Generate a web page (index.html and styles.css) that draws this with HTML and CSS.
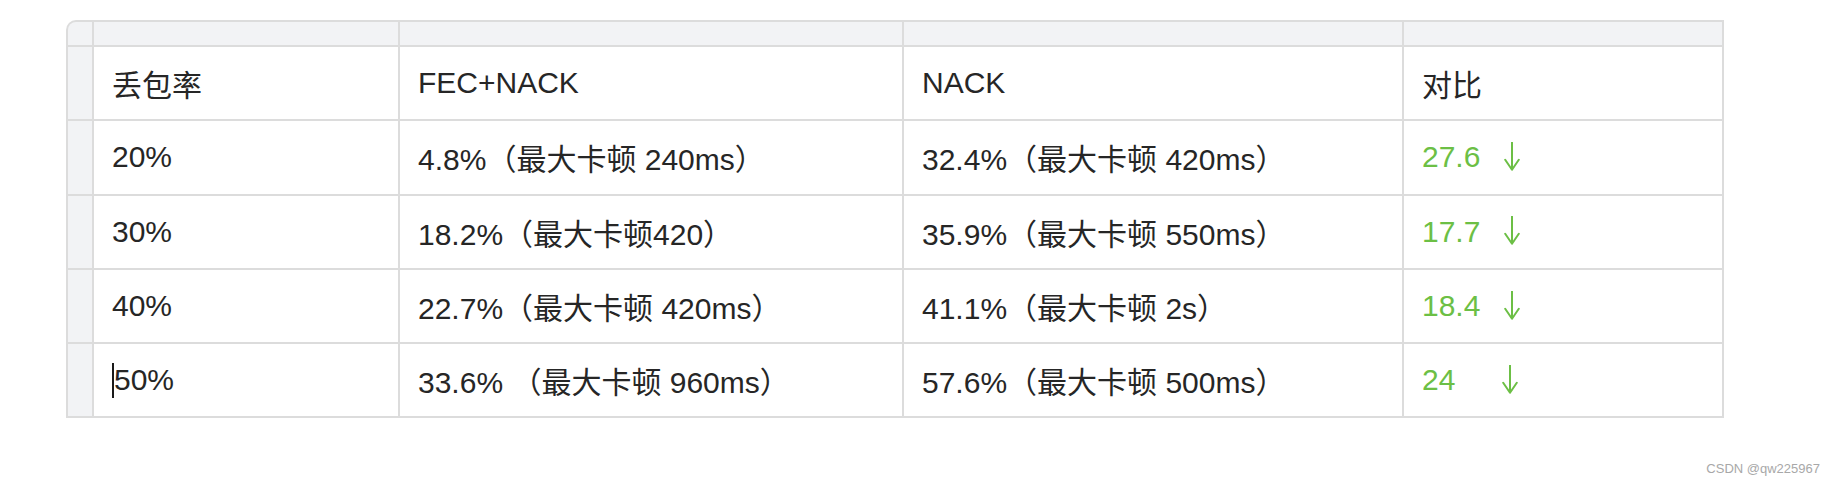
FILE: index.html
```html
<!DOCTYPE html>
<html lang="zh-CN">
<head>
<meta charset="utf-8">
<title>丢包率对比</title>
<link rel="stylesheet" href="styles.css">
</head>
<body>
<div class="sheet">
  <div class="corner"></div><div class="colhead"></div><div class="colhead"></div><div class="colhead"></div><div class="colhead"></div>

  <div class="rowhead"></div>
  <div class="cell">丢包率</div>
  <div class="cell">FEC+NACK</div>
  <div class="cell">NACK</div>
  <div class="cell">对比</div>

  <div class="rowhead"></div>
  <div class="cell">20%</div>
  <div class="cell">4.8%（最大卡顿 240ms）</div>
  <div class="cell">32.4%（最大卡顿 420ms）</div>
  <div class="cell good"><span class="num">27.6</span><svg class="arrow" width="16" height="29" viewBox="0 0 16 29" aria-label="↓"><path d="M8 0.5V27.5M1.2 17.8L8 27.8L14.8 17.8"/></svg></div>

  <div class="rowhead"></div>
  <div class="cell">30%</div>
  <div class="cell">18.2%（最大卡顿420）</div>
  <div class="cell">35.9%（最大卡顿 550ms）</div>
  <div class="cell good"><span class="num">17.7</span><svg class="arrow" width="16" height="29" viewBox="0 0 16 29" aria-label="↓"><path d="M8 0.5V27.5M1.2 17.8L8 27.8L14.8 17.8"/></svg></div>

  <div class="rowhead"></div>
  <div class="cell">40%</div>
  <div class="cell">22.7%（最大卡顿 420ms）</div>
  <div class="cell">41.1%（最大卡顿 2s）</div>
  <div class="cell good"><span class="num">18.4</span><svg class="arrow" width="16" height="29" viewBox="0 0 16 29" aria-label="↓"><path d="M8 0.5V27.5M1.2 17.8L8 27.8L14.8 17.8"/></svg></div>

  <div class="rowhead"></div>
  <div class="cell"><span class="caret"></span>50%</div>
  <div class="cell">33.6% （最大卡顿 960ms）</div>
  <div class="cell">57.6%（最大卡顿 500ms）</div>
  <div class="cell good"><span class="num">24</span><svg class="arrow short" width="16" height="29" viewBox="0 0 16 29" aria-label="↓"><path d="M8 0.5V27.5M1.2 17.8L8 27.8L14.8 17.8"/></svg></div>
</div>
<div class="watermark">CSDN @qw225967</div>
</body>
</html>
```

FILE: styles.css
```css
html, body {
  margin: 0;
  padding: 0;
  background: #ffffff;
}

body {
  position: relative;
  width: 1836px;
  height: 486px;
  overflow: hidden;
  font-family: "Liberation Sans", "Noto Sans CJK SC", sans-serif;
}

.sheet {
  margin: 20px 0 0 66px;
  width: 1654px;
  padding: 2px;
  display: grid;
  grid-template-columns: 24px 304px 502px 498px 318px;
  grid-template-rows: 23px repeat(5, 72.3px);
  gap: 2px;
  background: #dcdcdc;
  border-top-left-radius: 10px;
}

.corner {
  background: #f2f3f5;
  border-top-left-radius: 8px;
}

.colhead,
.rowhead {
  background: #f2f3f5;
}

.cell {
  background: #ffffff;
  display: flex;
  align-items: center;
  padding-left: 18px;
  font-size: 30px;
  color: #262626;
  white-space: pre;
}

.good {
  color: #6cbf45;
}

.num {
  display: inline-block;
  min-width: 58px;
}

.arrow {
  margin-left: 24px;
  margin-top: -2px;
  fill: none;
  stroke: #6cbf45;
  stroke-width: 2;
  stroke-linecap: round;
  stroke-linejoin: round;
}

.arrow.short {
  margin-left: 22px;
}

.caret {
  display: inline-block;
  width: 2px;
  height: 35px;
  background: #1a1a1a;
  margin-right: 0;
}

.watermark {
  position: absolute;
  right: 16px;
  top: 461px;
  font-size: 13px;
  color: #a8a8a8;
  letter-spacing: 0;
}
```
